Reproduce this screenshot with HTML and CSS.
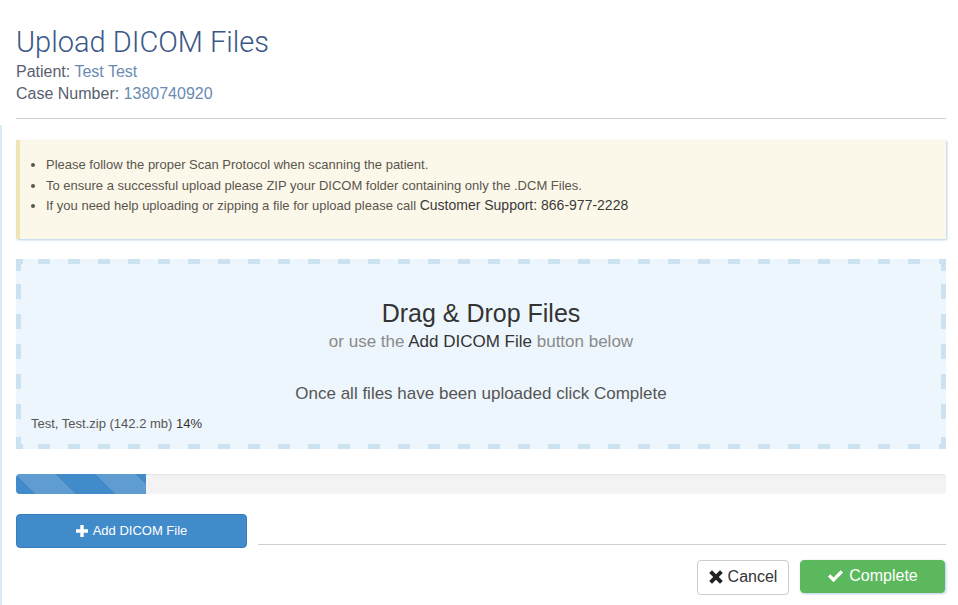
FILE: index.html
```html
<!DOCTYPE html>
<html>
<head>
<meta charset="utf-8">
<link rel="stylesheet" href="styles.css">
</head>
<body>
<div class="edge"></div>
<main class="page">
  <header class="head">
    <h1 class="title">Upload DICOM Files</h1>
    <div class="meta"><span class="label">Patient:</span> <span class="value">Test Test</span></div>
    <div class="meta"><span class="label">Case Number:</span> <span class="value">1380740920</span></div>
  </header>
  <hr class="rule">
  <section class="alert">
    <ul class="notes">
      <li>Please follow the proper Scan Protocol when scanning the patient.</li>
      <li>To ensure a successful upload please ZIP your DICOM folder containing only the .DCM Files.</li>
      <li>If you need help uploading or zipping a file for upload please call <span class="support">Customer Support: 866-977-2228</span></li>
    </ul>
  </section>
  <section class="dropzone">
    <div class="drop-title">Drag &amp; Drop Files</div>
    <div class="drop-sub">or use the <span class="dark">Add DICOM File</span> button below</div>
    <div class="drop-note">Once all files have been uploaded click Complete</div>
    <div class="file-line">Test, Test.zip (142.2 mb) <span class="dark">14%</span></div>
  </section>
  <div class="progress"><div class="progress-bar" style="width:14%"></div></div>
  <div class="add-row">
    <button class="btn btn-primary btn-add">
      <svg class="ico" viewBox="0 0 12 12" width="12" height="12"><path d="M4.3 0h3.4v4.3H12v3.4H7.7V12H4.3V7.7H0V4.3h4.3z" fill="#fff"/></svg>
      Add DICOM File
    </button>
    <div class="add-line"></div>
  </div>
  <div class="footer">
    <button class="btn btn-default">
      <svg class="ico" viewBox="0 0 14 14" width="14" height="14"><path d="M3 0.2L7 4.2 11 0.2 13.8 3 9.8 7 13.8 11 11 13.8 7 9.8 3 13.8 0.2 11 4.2 7 0.2 3z" fill="#222"/></svg>
      Cancel
    </button>
    <button class="btn btn-success">
      <svg class="ico" viewBox="0 0 16 14" width="17" height="14"><path d="M0.4 7.6L2.8 5.2 6 8.4 13.2 1.2 15.6 3.6 6 13.2z" fill="#fff"/></svg>
      Complete
    </button>
  </div>
</main>
</body>
</html>
```
FILE: styles.css
```css
html, body {
  margin: 0;
  padding: 0;
  background: #fff;
}
body {
  font-family: "Liberation Sans", Arial, sans-serif;
  color: #444;
}
.edge {
  position: fixed;
  left: 0;
  top: 125px;
  bottom: 0;
  width: 2px;
  background: #d6ebfa;
}
.page {
  padding: 0 12px 0 16px;
}
.head {
  padding-top: 26px;
}
.title {
  margin: 0 0 3px;
  font-family: Roboto, "Liberation Sans", sans-serif;
  font-weight: 300;
  font-size: 29px;
  line-height: 32px;
  color: #3a5886;
}
.meta {
  font-size: 16px;
  line-height: 22px;
}
.label {
  color: #58616f;
}
.value {
  color: #6a8bb2;
}
.rule {
  margin: 13px 0 21px;
  border: 0;
  border-top: 1px solid #cfcfcf;
  height: 0;
}
.alert {
  background: #fcf8e9;
  border-left: 4px solid #efe4b6;
  box-shadow: 1px 1px 2px rgba(120, 165, 210, 0.55);
  padding: 15px 15px 22px 10px;
  font-size: 13px;
  line-height: 20.5px;
  color: #5a5550;
}
.notes {
  margin: 0;
  padding-left: 16px;
}
.support {
  font-size: 14px;
  line-height: 1;
  color: #3a3a3a;
}
.dark {
  color: #333;
}
.dropzone {
  --dash: #cde2f1;
  margin-top: 20px;
  border: 5px solid transparent;
  background:
    linear-gradient(var(--dash), var(--dash)) 0 0 / 7px 5px no-repeat border-box,
    linear-gradient(var(--dash), var(--dash)) 0 0 / 5px 12px no-repeat border-box,
    linear-gradient(var(--dash), var(--dash)) 100% 0 / 7px 5px no-repeat border-box,
    linear-gradient(var(--dash), var(--dash)) 100% 0 / 5px 12px no-repeat border-box,
    linear-gradient(var(--dash), var(--dash)) 0 100% / 7px 5px no-repeat border-box,
    linear-gradient(var(--dash), var(--dash)) 0 100% / 5px 12px no-repeat border-box,
    linear-gradient(var(--dash), var(--dash)) 100% 100% / 7px 5px no-repeat border-box,
    linear-gradient(var(--dash), var(--dash)) 100% 100% / 5px 12px no-repeat border-box,
    repeating-linear-gradient(to right, var(--dash) 0 12px, transparent 12px 30px) 22px 0 / calc(100% - 40px) 5px no-repeat border-box,
    repeating-linear-gradient(to right, var(--dash) 0 12px, transparent 12px 30px) 22px 100% / calc(100% - 40px) 5px no-repeat border-box,
    repeating-linear-gradient(to bottom, var(--dash) 0 15px, transparent 15px 30px) 0 25px / 5px calc(100% - 40px) no-repeat border-box,
    repeating-linear-gradient(to bottom, var(--dash) 0 15px, transparent 15px 30px) 100% 25px / 5px calc(100% - 40px) no-repeat border-box,
    #eef6fd;
  padding: 34px 10px 11px;
  text-align: center;
}
.drop-title {
  font-size: 25px;
  line-height: 30px;
  color: #333;
}
.drop-sub {
  margin-top: 3px;
  font-size: 17px;
  line-height: 22px;
  color: #8a8a8a;
}
.drop-note {
  margin-top: 30px;
  font-size: 17px;
  line-height: 22px;
  color: #555;
}
.file-line {
  margin-top: 10px;
  text-align: left;
  font-size: 13px;
  line-height: 18px;
  color: #555;
}
.progress {
  margin-top: 25px;
  height: 20px;
  background: #f3f3f3;
  border-radius: 4px;
  box-shadow: inset 0 1px 2px rgba(0, 0, 0, 0.06);
  overflow: hidden;
}
.progress-bar {
  height: 100%;
  background-color: #428bca;
  background-image: linear-gradient(45deg, rgba(255,255,255,.15) 25%, transparent 25%, transparent 50%, rgba(255,255,255,.15) 50%, rgba(255,255,255,.15) 75%, transparent 75%, transparent);
  background-size: 80px 80px;
}
.add-row {
  margin-top: 20px;
  display: flex;
  align-items: flex-end;
}
.btn {
  font-family: "Liberation Sans", Arial, sans-serif;
  border-radius: 4px;
  border: 1px solid transparent;
  display: inline-flex;
  align-items: center;
  justify-content: center;
  gap: 5px;
  cursor: pointer;
  padding: 0;
}
.btn-primary {
  background: #428bca;
  border-color: #357ebd;
  color: #fff;
}
.btn-add {
  width: 231px;
  height: 34px;
  font-size: 13px;
}
.add-line {
  flex: 1;
  margin: 0 0 3px 11px;
  border-top: 1px solid #cfcfcf;
}
.footer {
  margin-top: 12px;
  padding-right: 1px;
  display: flex;
  justify-content: flex-end;
  align-items: flex-start;
  gap: 11px;
}
.btn-default {
  width: 92px;
  height: 35px;
  background: #fff;
  border-color: #ccc;
  color: #333;
  font-size: 16px;
}
.btn-success {
  width: 145px;
  height: 33px;
  background: #5cb85c;
  border-color: #5cb85c;
  color: #fff;
  font-size: 16px;
  box-shadow: 1px 1px 3px rgba(90, 140, 200, 0.45);
}
.ico {
  display: block;
  flex: none;
}
```
